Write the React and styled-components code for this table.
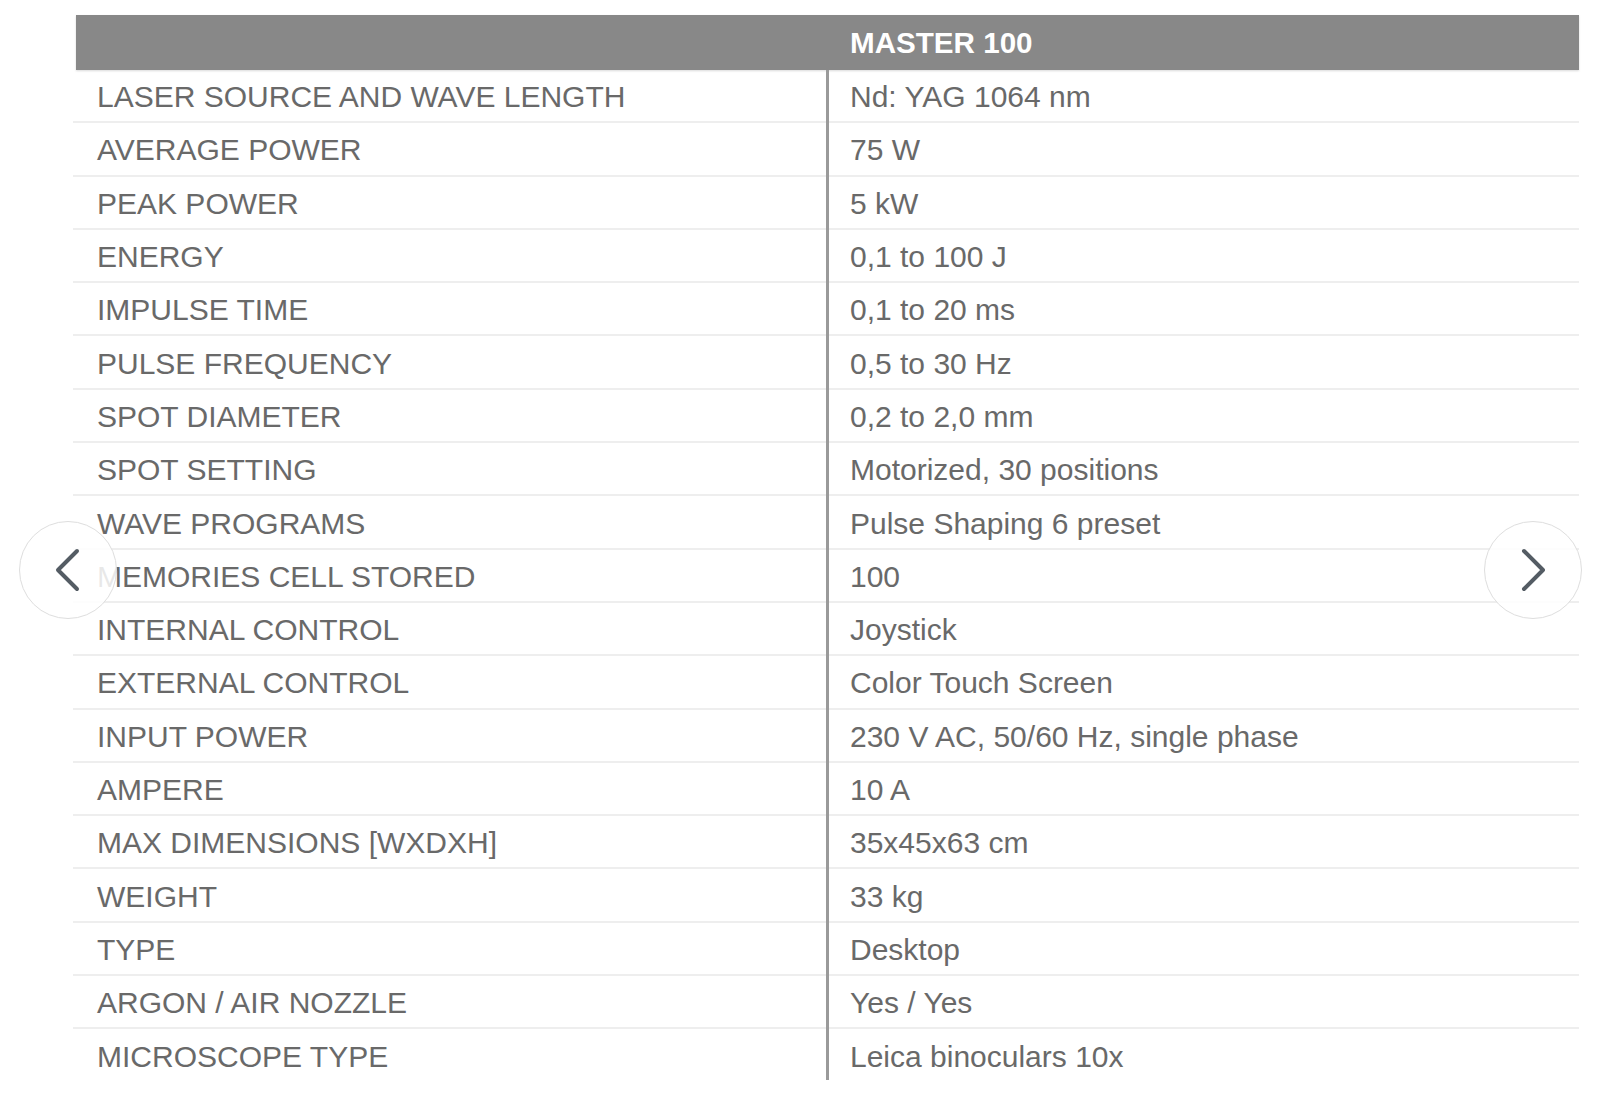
import React from 'react'
import styled, { createGlobalStyle } from 'styled-components'

const GlobalStyle = createGlobalStyle`
  html, body {
    margin: 0;
    padding: 0;
    background: #fff;
  }
  body {
    font-family: 'Liberation Sans', Arial, sans-serif;
  }
`

const Page = styled.div`
  position: relative;
  width: 1599px;
  height: 1107px;
  padding: 15px 20px 0 76px;
  box-sizing: border-box;
`

const Table = styled.div`
  width: 1503px;
`

const Header = styled.div`
  display: grid;
  grid-template-columns: 752px 1fr;
  height: 55px;
  align-items: center;
  background: #888888;
  color: #fff;
  font-weight: bold;
  font-size: 29.6px;
  box-shadow: 0 1px 2px rgba(0, 0, 0, 0.15);
`

const HeaderCell = styled.div`
  padding-left: 22px;
  padding-top: 1px;
`

const Body = styled.div`
  position: relative;

  &::after {
    content: '';
    position: absolute;
    top: 0;
    bottom: 3px;
    left: 750px;
    width: 3px;
    background: #9a9a9a;
  }
`

const Row = styled.div`
  display: grid;
  grid-template-columns: 752px 1fr;
  height: 53.3px;
  align-items: center;
  box-sizing: border-box;
  border-bottom: ${(p) => (p.last ? 'none' : '2px solid #eeeeee')};
  color: #696969;
  font-size: 30px;
  margin-left: -3px;
  padding: 3px 0 0 3px;
`

const Cell = styled.div`
  padding-left: ${(p) => (p.value ? '22px' : '21px')};
  white-space: nowrap;
`

const NavButton = styled.button`
  position: absolute;
  top: 521px;
  ${(p) => (p.side === 'left' ? 'left: 19px;' : 'left: 1484px;')}
  width: 98px;
  height: 98px;
  border-radius: 50%;
  border: 1.5px solid #dedede;
  background: rgba(255, 255, 255, 0.85);
  display: flex;
  align-items: center;
  justify-content: center;
  padding: 0;
  cursor: pointer;
`

const specs = [
  ['LASER SOURCE AND WAVE LENGTH', 'Nd: YAG 1064 nm'],
  ['AVERAGE POWER', '75 W'],
  ['PEAK POWER', '5 kW'],
  ['ENERGY', '0,1 to 100 J'],
  ['IMPULSE TIME', '0,1 to 20 ms'],
  ['PULSE FREQUENCY', '0,5 to 30 Hz'],
  ['SPOT DIAMETER', '0,2 to 2,0 mm'],
  ['SPOT SETTING', 'Motorized, 30 positions'],
  ['WAVE PROGRAMS', 'Pulse Shaping 6 preset'],
  ['MEMORIES CELL STORED', '100'],
  ['INTERNAL CONTROL', 'Joystick'],
  ['EXTERNAL CONTROL', 'Color Touch Screen'],
  ['INPUT POWER', '230 V AC, 50/60 Hz, single phase'],
  ['AMPERE', '10 A'],
  ['MAX DIMENSIONS [WXDXH]', '35x45x63 cm'],
  ['WEIGHT', '33 kg'],
  ['TYPE', 'Desktop'],
  ['ARGON / AIR NOZZLE', 'Yes / Yes'],
  ['MICROSCOPE TYPE', 'Leica binoculars 10x'],
]

const Chevron = ({ dir }) => (
  <svg width="30" height="44" viewBox="0 0 30 44" fill="none">
    <path
      d={dir === 'left' ? 'M24 3 L5 22 L24 41' : 'M6 3 L25 22 L6 41'}
      stroke="#545c64"
      strokeWidth="4"
      strokeLinecap="round"
      strokeLinejoin="round"
    />
  </svg>
)

export default function App() {
  return (
    <Page>
      <GlobalStyle />
      <Table>
        <Header>
          <HeaderCell />
          <HeaderCell>MASTER 100</HeaderCell>
        </Header>
        <Body>
          {specs.map(([label, value], i) => (
            <Row key={label} last={i === specs.length - 1}>
              <Cell>{label}</Cell>
              <Cell value>{value}</Cell>
            </Row>
          ))}
        </Body>
      </Table>
      <NavButton side="left" aria-label="Previous">
        <Chevron dir="left" />
      </NavButton>
      <NavButton side="right" aria-label="Next">
        <Chevron dir="right" />
      </NavButton>
    </Page>
  )
}
